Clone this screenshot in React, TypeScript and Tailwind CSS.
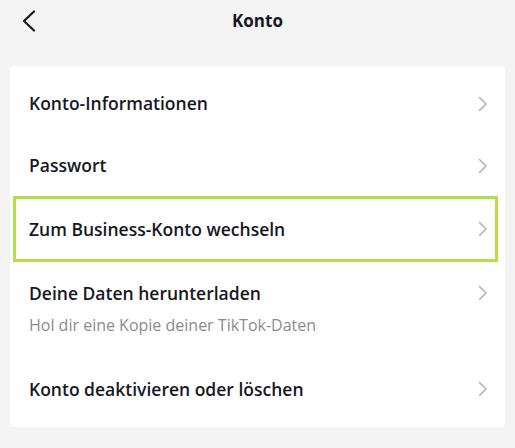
import React from 'react';

const Chevron = () => (
  <svg width="11" height="16" viewBox="0 0 11 16" fill="none" stroke="#b3b3b6" strokeWidth="1.6" strokeLinecap="round" strokeLinejoin="round">
    <path d="M2.5 1.5 L9 8 L2.5 14.5" />
  </svg>
);

const rowText = 'text-[17.5px] font-semibold text-[#161823]';

export default function App() {
  return (
    <div className="w-[515px] h-[448px] bg-[#f4f4f4] overflow-hidden" style={{ fontFamily: '"Open Sans", "Liberation Sans", sans-serif' }}>
      {/* Header */}
      <div className="relative h-[42px] flex items-center justify-center">
        <svg className="absolute left-[21px] top-[10px]" width="16" height="22" viewBox="0 0 16 22" fill="none" stroke="#161823" strokeWidth="2.2" strokeLinecap="round" strokeLinejoin="round">
          <path d="M13 1.5 L3 11 L13 20.5" />
        </svg>
        <span className="text-[17px] font-bold text-[#161823]">Konto</span>
      </div>

      {/* Card */}
      <div className="mx-[10px] mt-[24px] bg-white rounded-[4px] pt-[6px] pb-[6px]">
        <div className="h-[63px] flex items-center justify-between pl-[19px] pr-[17px]">
          <span className={rowText}>Konto-Informationen</span>
          <Chevron />
        </div>
        <div className="h-[61px] flex items-center justify-between pl-[19px] pr-[17px]">
          <span className={rowText}>Passwort</span>
          <Chevron />
        </div>
        <div className="h-[66px] ml-[3px] mr-[7px] border-[3px] border-[#b4df48] flex items-center justify-between pl-[13px] pr-[7px]">
          <span className={rowText}>Zum Business-Konto wechseln</span>
          <Chevron />
        </div>
        <div className="pt-[19px] pb-[21px] pl-[19px] pr-[17px]">
          <div className="h-[24px] flex items-center justify-between">
            <span className={rowText}>Deine Daten herunterladen</span>
            <Chevron />
          </div>
          <div className="mt-[9px] h-[22px] flex items-center text-[16px] text-[#8a8b91]">Hol dir eine Kopie deiner TikTok-Daten</div>
        </div>
        <div className="h-[64px] flex items-center justify-between pl-[19px] pr-[17px]">
          <span className={rowText}>Konto deaktivieren oder löschen</span>
          <Chevron />
        </div>
      </div>
    </div>
  );
}
